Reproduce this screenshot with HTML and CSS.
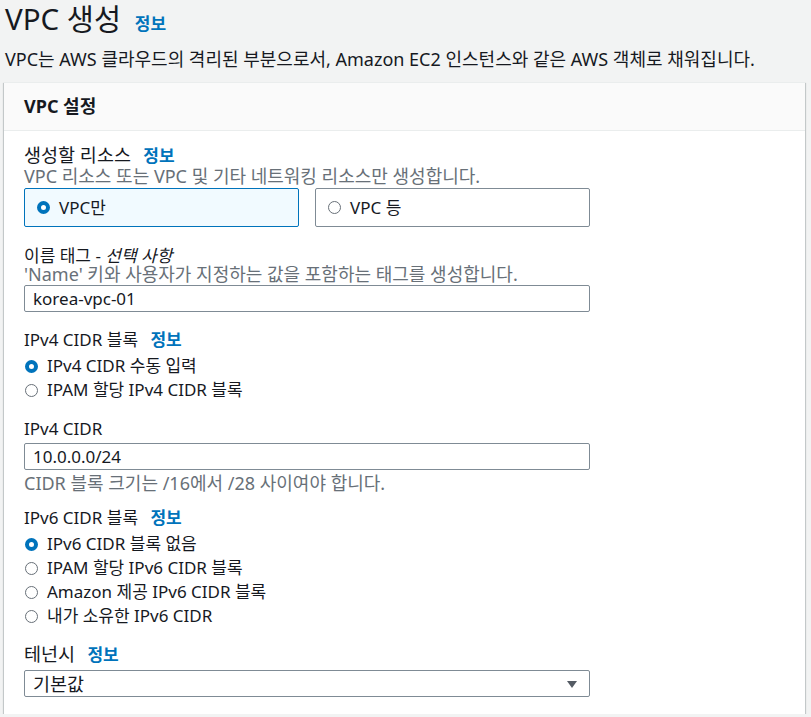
FILE: index.html
```html
<!DOCTYPE html>
<html lang="ko">
<head>
<meta charset="utf-8">
<title>VPC 생성</title>
<link rel="stylesheet" href="styles.css">
</head>
<body>
<div class="page">
  <header class="page-head">
    <h1 class="title">VPC 생성 <a class="info info-title" href="#">정보</a></h1>
    <p class="lead">VPC는 AWS 클라우드의 격리된 부분으로서, Amazon EC2 인스턴스와 같은 AWS 객체로 채워집니다.</p>
  </header>

  <section class="card">
    <div class="card-head"><h2>VPC 설정</h2></div>
    <div class="card-body">

      <div class="field f-res">
        <div class="label"><span class="ko">생성할 리소스</span> <a class="info" href="#">정보</a></div>
        <div class="desc">VPC 리소스 또는 VPC 및 기타 네트워킹 리소스만 생성합니다.</div>
        <div class="tiles">
          <div class="tile selected"><span class="radio on"></span>VPC만</div>
          <div class="tile"><span class="radio"></span>VPC 등</div>
        </div>
      </div>

      <div class="field f-name">
        <div class="label">이름 태그 - <em>선택 사항</em></div>
        <div class="desc">'Name' 키와 사용자가 지정하는 값을 포함하는 태그를 생성합니다.</div>
        <div class="input">korea-vpc-01</div>
      </div>

      <div class="field f-v4">
        <div class="label">IPv4 CIDR 블록 <a class="info" href="#">정보</a></div>
        <div class="radios">
          <div class="opt"><span class="radio on"></span>IPv4 CIDR 수동 입력</div>
          <div class="opt"><span class="radio"></span>IPAM 할당 IPv4 CIDR 블록</div>
        </div>
      </div>

      <div class="field f-cidr">
        <div class="label">IPv4 CIDR</div>
        <div class="input in-cidr">10.0.0.0/24</div>
        <div class="desc">CIDR 블록 크기는 /16에서 /28 사이여야 합니다.</div>
      </div>

      <div class="field f-v6">
        <div class="label">IPv6 CIDR 블록 <a class="info" href="#">정보</a></div>
        <div class="radios">
          <div class="opt"><span class="radio on"></span>IPv6 CIDR 블록 없음</div>
          <div class="opt"><span class="radio"></span>IPAM 할당 IPv6 CIDR 블록</div>
          <div class="opt"><span class="radio"></span>Amazon 제공 IPv6 CIDR 블록</div>
          <div class="opt"><span class="radio"></span>내가 소유한 IPv6 CIDR</div>
        </div>
      </div>

      <div class="field f-ten">
        <div class="label"><span class="ko">테넌시</span> <a class="info" href="#">정보</a></div>
        <div class="input select"><span class="ko">기본값</span><span class="caret"></span></div>
      </div>

    </div>
  </section>
</div>
</body>
</html>
```

FILE: styles.css
```css
* { box-sizing: border-box; }
html, body { margin: 0; padding: 0; }
body {
  background: #f2f3f3;
  color: #16191f;
  font-family: "Noto Sans", "Noto Sans CJK KR", sans-serif;
  font-size: 17px;
  line-height: 20px;
}
.page { padding: 0 6px 0 4px; }
.page-head { padding-left: 1px; }
.title {
  margin: 0;
  padding-top: 1px;
  font-size: 29.5px;
  line-height: 36px;
  font-weight: 400;
}
.info {
  color: #0073bb;
  font-weight: 700;
  font-size: 17px;
  text-decoration: none;
  margin-left: 8px;
}
.info-title { margin-left: 6px; font-size: 17px; }
.ko { font-size: 18.5px; }
.lead { margin: 6px 0 0; font-size: 18px; line-height: 22px; }
.card {
  margin-top: 12px;
  width: 801px;
  background: #fff;
  border-top: 1px solid #eaeded;
  box-shadow: 0 1px 1px 0 rgba(0,28,36,.3), 1px 1px 1px 0 rgba(0,28,36,.15), -1px 1px 1px 0 rgba(0,28,36,.15);
}
.card-head {
  background: #fafafa;
  border-bottom: 1px solid #eaeded;
  height: 48px;
  padding: 12px 20px;
}
.card-head h2 {
  margin: 0;
  font-size: 18px;
  line-height: 22px;
  font-weight: 700;
}
.card-body { padding: 14px 20px 17px; }
.field { width: 566px; }
.label { color: #16191f; }
.label em { font-style: italic; }
.desc { color: #687078; font-size: 18px; }
.f-name { margin-top: 19px; }
.f-name .desc { margin-top: -2px; }
.f-name .input { margin-top: 1px; }
.f-v4 { margin-top: 18px; }
.f-cidr { margin-top: 17px; }
.f-v6 { margin-top: 15px; }
.f-ten { margin-top: 16px; }

.tiles { display: flex; gap: 16px; margin-top: 2px; }
.tile {
  flex: 1;
  height: 39px;
  border: 1px solid #7f8b95;
  border-radius: 2px;
  display: flex;
  align-items: center;
  padding-left: 12px;
}
.tile.selected { background: #f1faff; border-color: #0073bb; }
.tile .radio { margin-right: 9px; }

.radio {
  display: inline-block;
  width: 13px;
  height: 13px;
  border-radius: 50%;
  border: 1px solid #687078;
  background: #fff;
  flex: none;
}
.radio.on { border: 4px solid #0073bb; }

.radios { margin-top: 4px; }
.opt {
  height: 24px;
  display: flex;
  align-items: center;
  padding-left: 1px;
}
.opt .radio { margin-right: 9px; }

.input {
  margin-top: 4px;
  height: 27px;
  border: 1px solid #7f8b95;
  border-radius: 2px;
  background: #fff;
  padding: 0 8px;
  display: flex;
  align-items: center;
}
.in-cidr { margin-top: 4px; margin-bottom: 3px; }
.select { position: relative; margin-top: 5px; }
.caret {
  position: absolute;
  right: 12px;
  top: 10px;
  width: 0;
  height: 0;
  border-left: 5px solid transparent;
  border-right: 5px solid transparent;
  border-top: 7px solid #545b64;
}
```
